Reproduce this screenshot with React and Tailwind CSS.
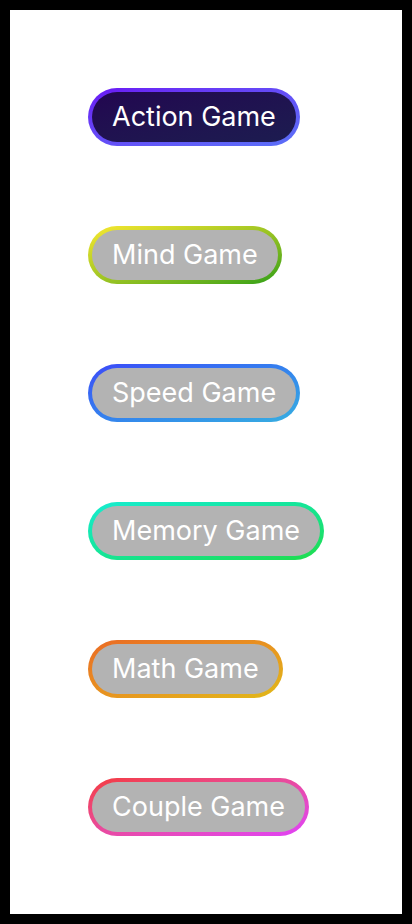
import React from "react";

const items = [
  { label: "Action Game", border: "bg-linear-to-br from-[#6a0ff5] to-[#5a70f8]", inner: "bg-linear-to-br from-[#220650] to-[#1c1c50]" },
  { label: "Mind Game", border: "bg-linear-to-br from-[#f8e830] to-[#28a018]", inner: "bg-[#b3b3b3]" },
  { label: "Speed Game", border: "bg-linear-to-br from-[#3c48f8] to-[#38aee0]", inner: "bg-[#b3b3b3]" },
  { label: "Memory Game", border: "bg-linear-to-br from-[#18ecd0] to-[#20dc48]", inner: "bg-[#b3b3b3]" },
  { label: "Math Game", border: "bg-linear-to-br from-[#ea6a24] to-[#e0b818]", inner: "bg-[#b3b3b3]" },
  { label: "Couple Game", border: "bg-linear-to-br from-[#f43a3a] to-[#e040f8]", inner: "bg-[#b3b3b3]" },
];

export default function App() {
  return (
    <div className="w-[412px] h-[924px] bg-black p-[10px]">
      <div className="w-full h-full bg-white flex flex-col items-start pl-[78px] pt-[78px] gap-[80px]">
        {items.map((it) => (
          <div key={it.label} className={`rounded-full p-[4px] ${it.border}`}>
            <div
              className={`rounded-full h-[50px] px-[20px] pb-[2px] flex items-center text-white text-[27px] leading-none ${it.inner}`}
              style={{ fontFamily: "Inter, 'Noto Sans', sans-serif" }}
            >
              {it.label}
            </div>
          </div>
        ))}
      </div>
    </div>
  );
}
